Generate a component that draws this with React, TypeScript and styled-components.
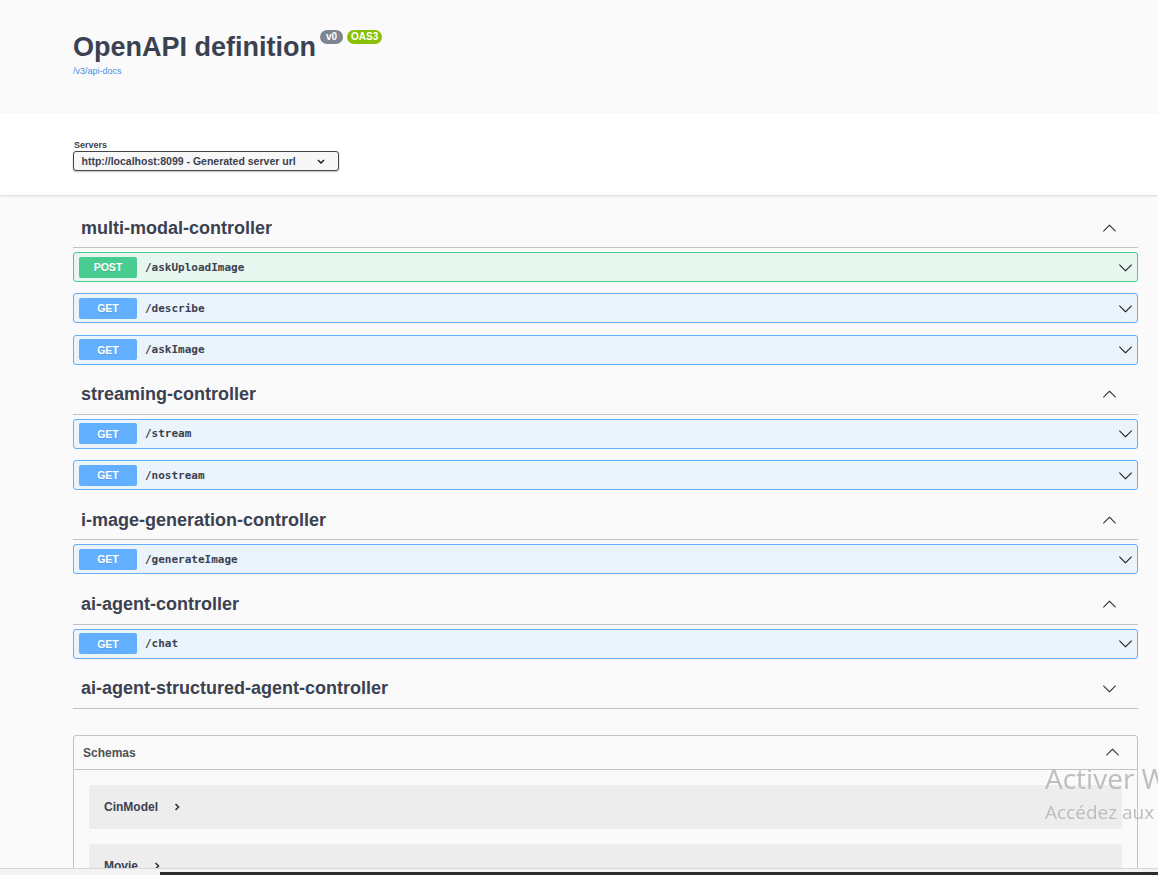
import React from 'react';
import styled, { createGlobalStyle } from 'styled-components';

const GlobalStyle = createGlobalStyle`
  html, body { margin: 0; padding: 0; overflow: hidden; background: #fafafa; }
  body { font-family: "Liberation Sans", Arial, sans-serif; color: #3b4151; }
  * { box-sizing: border-box; }
`;

const Page = styled.div`
  width: 1158px;
  min-height: 875px;
  background: #fafafa;
`;

const Wrapper = styled.div`
  padding: 0 20px 0 73px;
`;

const InfoSection = styled.section`
  height: 113px;
  background: #fafafa;
  padding-top: 29px;
`;

const TitleRow = styled.div`
  display: flex;
  align-items: flex-start;
`;

const Title = styled.h2`
  margin: 0;
  font-size: 27px;
  line-height: 36px;
  font-weight: 700;
  color: #3b4151;
`;

const Badge = styled.span<{ $bg: string }>`
  margin-top: 1px;
  margin-left: 4px;
  height: 14px;
  min-width: 23px;
  padding: 0 4px;
  border-radius: 57px;
  background: ${p => p.$bg};
  color: #fff;
  font-size: 10px;
  font-weight: 700;
  line-height: 14px;
  display: inline-flex;
  justify-content: center;
`;

const BaseUrl = styled.a`
  display: block;
  font-size: 9px;
  line-height: 12px;
  color: #4990e2;
  text-decoration: none;
`;

const SchemeContainer = styled.section`
  background: #fff;
  box-shadow: 0 1px 2px 0 rgba(0, 0, 0, 0.15);
  padding: 26px 0 24px;
`;

const Label = styled.div`
  font-size: 9px;
  line-height: 12px;
  font-weight: 700;
  padding-left: 1px;
  color: #3b4151;
`;

const Select = styled.div`
  width: 266px;
  height: 20px;
  border: 1.5px solid #41444e;
  border-radius: 3px;
  box-shadow: 0 1px 2px 0 rgba(0, 0, 0, 0.25);
  display: flex;
  align-items: center;
  justify-content: space-between;
  padding-left: 7.5px;
  font-size: 10.5px;
  font-weight: 700;
  color: #3b4151;
  background: #f7f7f7;
`;

const SelectChevron = styled.svg`
  margin-right: 13px;
`;

const Main = styled.main`
  padding-top: 14px;
`;

const TagSection = styled.section`
  display: flow-root;
`;

const TagHeader = styled.h3`
  margin: 0 0 4px;
  height: 39px;
  border-bottom: 1px solid rgba(59, 65, 81, 0.3);
  display: flex;
  align-items: center;
  justify-content: space-between;
  padding-left: 8px;
  font-size: 18px;
  font-weight: 700;
  color: #3b4151;
`;

const TagArrow = styled.svg`
  margin-right: 21px;
  fill: #333;
`;

const OpRow = styled.div<{ $border: string; $bg: string }>`
  height: 30px;
  border: 1px solid ${p => p.$border};
  background: ${p => p.$bg};
  border-radius: 3px;
  display: flex;
  align-items: center;
  padding-left: 5px;
  margin-bottom: 11.25px;
`;

const Method = styled.span<{ $bg: string }>`
  width: 58px;
  height: 21px;
  border-radius: 2px;
  background: ${p => p.$bg};
  color: #fff;
  font-size: 10.5px;
  font-weight: 700;
  display: flex;
  align-items: center;
  justify-content: center;
  text-shadow: 0 1px 0 rgba(0, 0, 0, 0.1);
`;

const Path = styled.span`
  flex: 1;
  padding-left: 8px;
  font-family: "DejaVu Sans Mono", "Liberation Mono", monospace;
  font-size: 11px;
  font-weight: 600;
  color: #3b4151;
`;

const RowArrow = styled.svg`
  margin-right: 4px;
  fill: #222;
`;

const Models = styled.section`
  margin-top: 22.5px;
  border: 1px solid rgba(59, 65, 81, 0.3);
  border-radius: 3px;
`;

const ModelsHeader = styled.h4`
  margin: 0;
  height: 34px;
  border-bottom: 1px solid rgba(59, 65, 81, 0.3);
  display: flex;
  align-items: center;
  justify-content: space-between;
  padding-left: 9px;
  font-size: 12px;
  font-weight: 700;
  color: #505050;
`;

const ModelsArrow = styled.svg`
  margin-right: 17px;
  fill: #333;
`;

const ModelList = styled.div`
  padding: 15px 15px 0;
`;

const ModelItem = styled.div`
  height: 44px;
  border-radius: 3px;
  background: #ededed;
  margin-bottom: 15px;
  display: flex;
  align-items: center;
  padding-left: 15px;
  font-size: 12px;
  font-weight: 700;
  color: #3b4151;
`;

const ModelToggle = styled.svg`
  margin-left: 16px;
`;

const Watermark = styled.div`
  position: fixed;
  left: 1045px;
  top: 759px;
  font-family: "Open Sans", "Noto Sans", sans-serif;
  color: #bdbdbd;
  white-space: nowrap;
  pointer-events: none;
`;

const WmTitle = styled.div`
  font-size: 28px;
  line-height: 38px;
`;

const WmSub = styled.div`
  font-size: 19px;
  line-height: 30px;
`;

const BottomBar = styled.div`
  position: fixed;
  left: 0;
  right: 0;
  bottom: 0;
  height: 7px;
  background: #f3f3f3;
  border-top: 1px solid #d9d9d9;
`;

const BottomThumb = styled.div`
  position: absolute;
  left: 160px;
  right: 0;
  bottom: 0;
  height: 3px;
  background: #2d2d2d;
`;

const ARROW = 'M17.418 6.109c.272-.268.709-.268.979 0s.271.701 0 .969l-7.908 7.83c-.27.268-.707.268-.979 0l-7.908-7.83c-.27-.268-.27-.701 0-.969.271-.268.709-.268.979 0L10 13.25l7.418-7.141z';

const Down = ({ as: C }: { as: any }) => (
  <C width="15" height="15" viewBox="0 0 20 20"><path d={ARROW} /></C>
);
const Up = ({ as: C }: { as: any }) => (
  <C width="15" height="15" viewBox="0 0 20 20"><path d={ARROW} transform="rotate(180 10 10)" /></C>
);

type Op = { method: 'GET' | 'POST'; path: string };
type Tag = { name: string; open: boolean; ops: Op[] };

const tags: Tag[] = [
  { name: 'multi-modal-controller', open: true, ops: [
    { method: 'POST', path: '/askUploadImage' },
    { method: 'GET', path: '/describe' },
    { method: 'GET', path: '/askImage' },
  ] },
  { name: 'streaming-controller', open: true, ops: [
    { method: 'GET', path: '/stream' },
    { method: 'GET', path: '/nostream' },
  ] },
  { name: 'i-mage-generation-controller', open: true, ops: [
    { method: 'GET', path: '/generateImage' },
  ] },
  { name: 'ai-agent-controller', open: true, ops: [
    { method: 'GET', path: '/chat' },
  ] },
  { name: 'ai-agent-structured-agent-controller', open: false, ops: [] },
];

const colors = {
  GET: { border: '#61affe', bg: '#ebf3fb', badge: '#61affe' },
  POST: { border: '#49cc90', bg: '#e8f6f0', badge: '#49cc90' },
};

export default function App() {
  return (
    <Page>
      <GlobalStyle />
      <InfoSection>
        <Wrapper>
          <TitleRow>
            <Title>OpenAPI definition</Title>
            <Badge $bg="#7d8492">v0</Badge>
            <Badge $bg="#89bf04">OAS3</Badge>
          </TitleRow>
          <BaseUrl href="#">/v3/api-docs</BaseUrl>
        </Wrapper>
      </InfoSection>
      <SchemeContainer>
        <Wrapper>
          <Label>Servers</Label>
          <Select>
            <span>http://localhost:8099 - Generated server url</span>
            <SelectChevron width="8" height="5" viewBox="0 0 8 5">
              <polyline points="1,1 4,4 7,1" fill="none" stroke="#222" strokeWidth="1.5" />
            </SelectChevron>
          </Select>
        </Wrapper>
      </SchemeContainer>
      <Main>
        <Wrapper>
          {tags.map(tag => (
            <TagSection key={tag.name}>
              <TagHeader>
                <span>{tag.name}</span>
                {tag.open ? <Up as={TagArrow} /> : <Down as={TagArrow} />}
              </TagHeader>
              {tag.ops.map(op => (
                <OpRow key={op.path} $border={colors[op.method].border} $bg={colors[op.method].bg}>
                  <Method $bg={colors[op.method].badge}>{op.method}</Method>
                  <Path>{op.path}</Path>
                  <Down as={RowArrow} />
                </OpRow>
              ))}
            </TagSection>
          ))}
          <Models>
            <ModelsHeader>
              <span>Schemas</span>
              <Up as={ModelsArrow} />
            </ModelsHeader>
            <ModelList>
              {['CinModel', 'Movie', 'Response'].map(m => (
                <ModelItem key={m}>
                  <span>{m}</span>
                  <ModelToggle width="6" height="8" viewBox="0 0 6 8">
                    <polyline points="1.5,1 4.5,4 1.5,7" fill="none" stroke="#333" strokeWidth="1.6" />
                  </ModelToggle>
                </ModelItem>
              ))}
            </ModelList>
          </Models>
        </Wrapper>
      </Main>
      <Watermark>
        <WmTitle>Activer Windows</WmTitle>
        <WmSub>Accédez aux paramètres pour activer Windows.</WmSub>
      </Watermark>
      <BottomBar>
        <BottomThumb />
      </BottomBar>
    </Page>
  );
}
